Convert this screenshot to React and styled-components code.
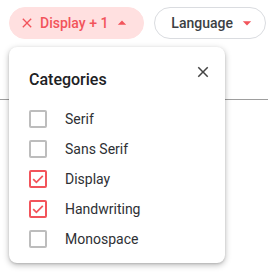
import React from 'react';
import styled, { createGlobalStyle } from 'styled-components';

const GlobalStyle = createGlobalStyle`
  body {
    margin: 0;
    background: #fff;
    font-family: Roboto, 'Noto Sans', sans-serif;
  }
`;

const RED = '#f2545b';

const categories = [
  { name: 'Serif', checked: false },
  { name: 'Sans Serif', checked: false },
  { name: 'Display', checked: true },
  { name: 'Handwriting', checked: true },
  { name: 'Monospace', checked: false },
];

const CloseIcon = ({ size = 16, color = 'currentColor' }) => (
  <svg width={size} height={size} viewBox="0 0 24 24" fill={color}>
    <path d="M19 6.41 17.59 5 12 10.59 6.41 5 5 6.41 10.59 12 5 17.59 6.41 19 12 13.41 17.59 19 19 17.59 13.41 12z" />
  </svg>
);

const ArrowIcon = ({ up }) => (
  <svg width="20" height="20" viewBox="0 0 24 24" fill={RED}>
    <path d={up ? 'M7 14l5-5 5 5z' : 'M7 10l5 5 5-5z'} />
  </svg>
);

const App = () => {
  return (
    <Page>
      <GlobalStyle />
      <Toolbar>
        <ChipWrap>
          <Chip active>
            <CloseIcon size={16} color={RED} />
            <span>Display + 1</span>
            <ArrowIcon up />
          </Chip>
          <Popup>
            <PopupHeader>
              <Title>Categories</Title>
              <CloseButton>
                <CloseIcon size={18} color="#444" />
              </CloseButton>
            </PopupHeader>
            <List>
              {categories.map((c) => (
                <Row key={c.name}>
                  <Box checked={c.checked}>
                    {c.checked && (
                      <svg width="14" height="14" viewBox="0 0 14 14" fill="none">
                        <path d="M2.2 7.2 5.4 10.3 11.8 3.9" stroke={RED} strokeWidth="1.8" />
                      </svg>
                    )}
                  </Box>
                  <Label>{c.name}</Label>
                </Row>
              ))}
            </List>
          </Popup>
        </ChipWrap>
        <Chip>
          <span>Language</span>
          <ArrowIcon />
        </Chip>
      </Toolbar>
      <Divider />
    </Page>
  );
};

export default App;

const Page = styled.div`
  width: 268px;
  height: 277px;
  overflow: hidden;
  padding-top: 7px;
  box-sizing: border-box;
`;

const Toolbar = styled.div`
  display: flex;
  gap: 10px;
  padding-left: 9px;
`;

const ChipWrap = styled.div`
  position: relative;
`;

const Chip = styled.div`
  display: flex;
  align-items: center;
  height: 32px;
  box-sizing: border-box;
  border-radius: 16px;
  font-size: 14px;
  font-weight: 500;
  padding: ${(p) => (p.active ? '0 11px 0 9px' : '0 8px 0 16px')};
  background: ${(p) => (p.active ? '#ffe0e0' : '#fff')};
  color: ${(p) => (p.active ? RED : '#3c4043')};
  border: 1px solid ${(p) => (p.active ? '#ffe0e0' : '#dadce0')};
  white-space: nowrap;

  span {
    margin: 0 4px 0 ${(p) => (p.active ? '5px' : '0')};
  }

  svg {
    flex: none;
  }
`;

const Popup = styled.div`
  position: absolute;
  top: 40px;
  left: 0;
  z-index: 2;
  width: 216px;
  box-sizing: border-box;
  padding: 16px 13px 9px 20px;
  background: #fff;
  border-radius: 8px;
  box-shadow: 0 2px 6px rgba(0, 0, 0, 0.28), 0 1px 2px rgba(0, 0, 0, 0.12);
`;

const PopupHeader = styled.div`
  display: flex;
  justify-content: space-between;
  align-items: flex-start;
`;

const Title = styled.div`
  padding-top: 5px;
  font-size: 16px;
  line-height: 24px;
  font-weight: 500;
  color: #202124;
`;

const CloseButton = styled.div`
  width: 18px;
  height: 18px;
  display: flex;
`;

const List = styled.div`
  display: flex;
  flex-direction: column;
  margin-top: 12px;
`;

const Row = styled.div`
  display: flex;
  align-items: center;
  height: 30px;
  gap: 18px;
`;

const Box = styled.div`
  width: 18px;
  height: 18px;
  box-sizing: border-box;
  border: 2px solid ${(p) => (p.checked ? RED : '#bdbdbd')};
  border-radius: 2px;
  display: flex;
  align-items: center;
  justify-content: center;
`;

const Label = styled.span`
  font-size: 14px;
  color: #2e3034;
`;

const Divider = styled.div`
  margin-top: 60px;
  height: 1px;
  background: #9e9e9e;
`;
